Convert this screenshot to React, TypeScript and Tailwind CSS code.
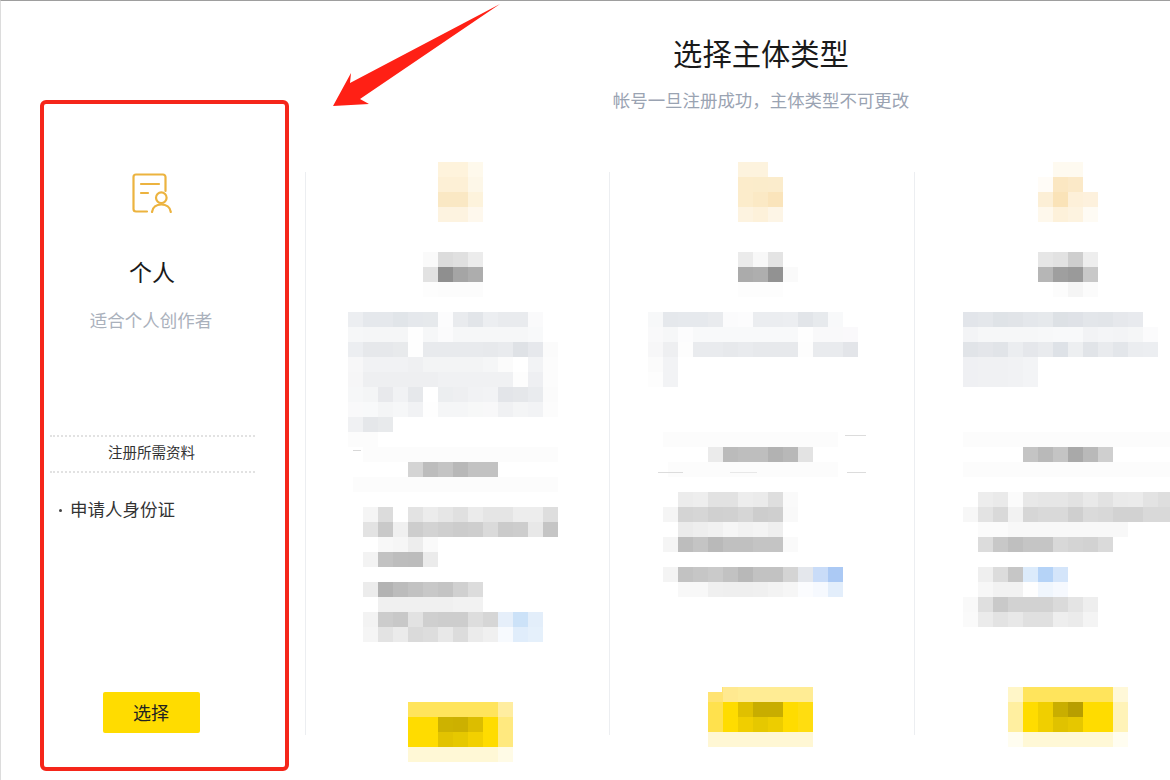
type Row = [number, number, string];
type Box = [number, number, number, number, string];

const FONT = "font-['Liberation_Sans','Noto_Sans_CJK_SC',sans-serif]";

// mosaic cells: [y, first x, colours], all in page coordinates, 15px per cell
const col1: Row[] = [
  [162, 438, "fef3dc fef3dc fef9ec"],
  [177, 438, "fdf0d6 fdf0d6 fdf7e8"],
  [192, 438, "fae8c4 fae8c4 fdf3dc"],
  [207, 438, "fdf3e0 fdf3e0 fef8ed"],
  [252, 423, "fafafa dcdcdc e0e0e0 ececec"],
  [267, 423, "e2e2e2 8f8f8f a5a5a5 adadad"],
  [282, 423, "fdfdfd fcfcfc fcfcfc fcfcfc"],
  [312, 348, "eceef1 e5e8ec e5e8ec e1e5e9 e5e8ec e6e9ec fcfcfd e9ebee e2e5e9 eceef1 e9ebee e9ebee fafafb"],
  [327, 348, "f6f7f8 f5f6f7 f5f6f7 f5f6f7 fefefe f6f7f8 fbfbfc f6f7f8 f6f7f8 f6f7f8 f6f7f8 f6f7f8 f8f9fa"],
  [342, 348, "eceef1 e6e8eb e6e8eb e8eaec fefefe e8eaed e8eaed e8eaed e8eaed e7e9ec e9ebee dfe2e6 e6e8ec fbfbfb"],
  [357, 348, "f7f7f8 f1f2f4 f1f2f4 f1f2f4 eff0f2 f3f4f5 f3f4f5 f3f4f5 f3f4f5 f5f6f7 fbfbfb ffffff f2f3f5 fcfcfc"],
  [372, 348, "f6f6f7 eeeff1 eeeff1 eeeff1 eeeff1 eeeff1 f0f1f3 f0f1f3 f0f1f3 f0f1f3 f0f1f3 fdfdfd eeeff2 fcfcfc"],
  [387, 348, "f6f7f8 f4f5f6 e8e9ec f1f2f4 e6e8eb ffffff eceef0 eeeff1 f1f2f4 f2f3f5 e3e5e9 e5e7ea e9ebee fbfbfb"],
  [402, 348, "f9f9fa f8f9fa f4f5f6 f6f7f8 f1f2f4 fefefe f5f6f7 f5f6f7 f7f8f8 f8f8f9 f0f1f3 f4f5f6 f2f3f5 fcfcfc"],
  [417, 348, "f0f1f3 e5e7ea e8eaec"],
  [432, 348, "fcfcfc fcfcfc"],
  [462, 408, "d4d4d4 bdbdbd c4c4c4 b8b8b8 c2c2c2 c2c2c2"],
  [507, 363, "f5f5f5 dcdcdc - e3e3e3 ececec e6e6e6 e0e0e0 ebebeb e5e5e5 e5e5e5 ededed ededed dedede"],
  [522, 363, "e3e3e3 c9c9c9 f0f0f0 cdcdcd d3d3d3 cfcfcf cccccc cecece dadada cbcbcb cdcdcd e8e8e8 c5c5c5"],
  [537, 378, "f8f8f8 f6f6f6 ededed fafafa"],
  [552, 363, "f3f3f3 c2c2c2 bdbdbd bcbcbc ebebeb"],
  [582, 363, "ececec b3b3b3 bcbcbc c2c2c2 c8c8c8 c4c4c4 d0d0d0 dcdcdc"],
  [597, 378, "f0f0f0 f0f0f0 f0f0f0 f0f0f0 f0f0f0 f2f2f2 f2f2f2"],
  [612, 363, "f3f3f3 cccccc c8c8c8 e2e2e2 cfcfcf cdcdcd cdcdcd dddddd d6d6d6 e6effa cce2f8 e3eefa"],
  [627, 363, "f5f5f5 e3e3e3 ebebeb dadada dddddd e8e8e8 dcdcdc ebebeb f0f0f0 f7fafe e0edfb e5f0fb"],
  [702, 408, "ffe45c ffe45c ffe45c ffe45c ffe45c ffe45c ffeda0"],
  [717, 408, "ffdc00 ffdc00 cdb200 ccb000 dcbd00 ffdc00 ffe97f"],
  [732, 408, "ffdc00 ffdc00 e2c300 e6c800 f2d000 ffdc00 ffe97f"],
  [747, 408, "fff8d6 fff8d6 fff8d6 fff8d6 fff8d6 fff8d6 fffbe6"],
];
const box1: Box[] = [
  [363, 447, 195, 15, "fcfcfc"],
  [353, 477, 205, 15, "fcfcfc"],
  [353, 450, 8, 1, "d8d8d8"],
];

const col2: Row[] = [
  [162, 738, "fdf3de fdf3de"],
  [177, 738, "fceccb fbeccb fbeccc"],
  [192, 738, "fceccb fbe9c5 fae4bb"],
  [207, 738, "fdf3e0 fdf1da fdf5e6"],
  [252, 738, "ebebeb f8f8f8 e4e4e4"],
  [267, 738, "ababab aeaeae 929292 fafafa"],
  [282, 738, "fdfdfd fdfdfd fdfdfd"],
  [312, 648, "f7f8f9 e5e8ec e6e9ed e6e9ed e9ebee fbfbfc fcfcfd ebedf0 ebedf0 eceef1 e2e5e9 e7eaed f8f9fa"],
  [327, 648, "f9f9fa f6f7f8 fcfcfd f8f9fa f8f9fa f8f9fa f8f9fa f8f9fa f8f9fa f8f9fa fefefe f9f9fa f9f9fa faf9fb"],
  [342, 648, "f7f7f8 eeeff1 fdfdfd e9ebee e9ebee e7e9ec e9ebee e7e9ec e7e9ec e7e9ec fdfdfd e9ebee e9ebee e3e5e9"],
  [357, 648, "fbfbfb f2f3f5"],
  [372, 648, "fdfdfd f2f3f5"],
  [447, 708, "ebebeb bbbbbb bebebe bebebe b2b2b2 b8b8b8 e3e3e3"],
  [492, 678, "ececec eeeeee e2e2e2 e2e2e2 ededed ebebeb dedede fafafa"],
  [507, 663, "f5f5f5 d4d4d4 d6d6d6 d0d0d0 d1d1d1 d6d6d6 cdcdcd cfcfcf f9f9f9"],
  [522, 678, "ebebeb eeeeee f1f1f1 f6f6f6 f2f2f2 f4f4f4 efefef"],
  [537, 663, "f5f5f5 bdbdbd c4c4c4 b9b9b9 c0c0c0 c0c0c0 c4c4c4 c4c4c4 fafafa"],
  [567, 663, "f4f4f4 c2c2c2 c6c6c6 cacaca c2c2c2 b8b8b8 c2c2c2 c2c2c2 d4d4d4 e4e7ec c9dcf8 abc9f4"],
  [582, 678, "f8f8f8 f8f8f8 f0f0f0 efefef efefef f0f0f0 f3f3f3 f6f6f6 fbfcfe f6f9fe e3eefb"],
  [687, 708, "ffe372 ffe990 ffec94 ffec94 ffec94 ffec94 ffec94"],
  [702, 708, "ffe14d ffdc00 e0c000 c8ad00 c8ad00 ffdc00 ffdd10"],
  [717, 708, "ffe14d ffdc00 f0ce00 e6c800 edcd00 ffdc00 ffdd10"],
  [732, 708, "fff7d4 fff7d4 fff7d4 fff7d4 fff7d4 fff7d4 fff7d4"],
];
const box2: Box[] = [
  [663, 432, 175, 15, "fcfcfc"],
  [845, 435, 21, 1, "dcdcdc"],
  [668, 462, 170, 15, "fcfcfc"],
  [658, 472, 25, 1, "dcdcdc"],
  [730, 472, 27, 1, "e8e8e8"],
  [847, 472, 19, 1, "dcdcdc"],
  [708, 687, 14, 5, "ffffff"],
];

const col3: Row[] = [
  [162, 1053, "fefaf0 fefaf0"],
  [177, 1038, "fffcf7 fbe7c2 fbe9c8"],
  [192, 1038, "fcefd6 fae3b8 fdf0d9 fdf1dd"],
  [207, 1038, "fef8ec fdf1da fdf3e0 fefbf4"],
  [252, 1038, "e6e6e6 e2e2e2 cecece eeeeee"],
  [267, 1038, "b6b6b6 9f9f9f 9a9a9a c8c8c8"],
  [282, 1053, "fcfcfc f5f5f5 fbfbfb"],
  [312, 963, "e2e5ea e4e7eb dfe3e7 e1e4e8 e4e7eb e6e9ec dde1e5 dfe2e7 e3e6ea e2e5e9 e6e8ec e8eaee"],
  [327, 963, "f3f4f6 f6f7f8 f6f7f8 f6f7f8 f6f7f8 f7f8f9 f8f9fa f8f9fa f2f3f5 f4f5f7 f3f4f6 f5f6f7 fbfbfc"],
  [342, 963, "e1e4e8 e4e6ea e1e4e8 ebedf0 e5e7eb e9ebee dee2e7 edeff1 e1e4e8 e9ebee e3e6ea ebedf0 eceef1"],
  [357, 963, "eff0f3 f0f1f3 f0f1f3 f1f2f4 f3f4f6"],
  [372, 963, "eff0f3 f0f1f3 f0f1f3 f1f2f4 f3f4f6"],
  [447, 1023, "c4c4c4 b9b9b9 c4c4c4 a9a9a9 b9b9b9 cfcfcf"],
  [492, 978, "ededed eaeaea fbfbfb e8e8e8 e6e6e6 e6e6e6 e2e2e2 e9e9e9 e2e2e2 eaeaea ebebeb e3e3e3 dedede"],
  [507, 963, "f7f7f7 e3e3e3 d9d9d9 f2f2f2 d6d6d6 d9d9d9 d9d9d9 cfcfcf dadada d8d8d8 d2d2d2 d2d2d2 d9d9d9 d9d9d9"],
  [522, 978, "fbfbfb fbfbfb f8f8f8 f8f8f8 f8f8f8 f8f8f8 f8f8f8 f8f8f8 f8f8f8 f8f8f8"],
  [537, 978, "dcdcdc c8c8c8 bfbfbf c5c5c5 c5c5c5 d8d8d8 d4d4d4 d2d2d2 dadada"],
  [567, 978, "efefef dcdcdc c6c6c6 dcebfb b5d3f7 d4e5fa"],
  [582, 978, "f7f7f7 f2f2f2 f2f2f2 fefefe f0f6fd f6f9fe"],
  [597, 963, "f9f9f9 dfdfdf c9c9c9 d2d2d2 d2d2d2 d2d2d2 dadada e4e4e4 eeeeee"],
  [612, 963, "fafafa ebebeb e3e3e3 e8e8e8 e0e0e0 e0e0e0 eeeeee ebebeb f4f4f4"],
  [687, 1008, "fff6c8 ffe45c ffe45c ffe45c ffe45c ffe45c ffe45c fff8d8"],
  [702, 1008, "ffefa0 ffdc00 f0cf00 c9ae00 b89e00 ffdc00 ffdc00 fff3b8"],
  [717, 1008, "ffefa0 ffdc00 f0cf00 e0c200 e6c700 ffdc00 ffdc00 fff3b8"],
  [732, 1008, "fffdf0 fff8d6 fff8d6 fff8d6 fff8d6 fff8d6 fff8d6 fffdf0"],
];
const box3: Box[] = [
  [963, 432, 207, 15, "fcfcfc"],
  [963, 462, 207, 15, "fcfcfc"],
];

function Mosaic({ x, rows, boxes }: { x: number; rows: Row[]; boxes: Box[] }) {
  return (
    <svg
      width="304"
      height="600"
      viewBox={`${x} 162 304 600`}
      shapeRendering="crispEdges"
      className="-mt-[10px] block overflow-hidden"
    >
      {boxes.map(([bx, by, w, h, c], i) =>
        c === "ffffff" ? null : <rect key={i} x={bx} y={by} width={w} height={h} fill={`#${c}`} />
      )}
      {rows.map(([y, sx, colours]) =>
        colours.split(" ").map((c, i) =>
          c === "-" ? null : <rect key={`${y}-${i}`} x={sx + i * 15} y={y} width="15" height="15" fill={`#${c}`} />
        )
      )}
      {boxes.map(([bx, by, w, h, c], i) =>
        c === "ffffff" ? <rect key={i} x={bx} y={by} width={w} height={h} fill="#fff" /> : null
      )}
    </svg>
  );
}

function PersonDocIcon() {
  return (
    <svg width="42" height="41" viewBox="132 172 42 41" fill="none" stroke="#ecb33f" strokeWidth="2.200" strokeLinecap="round" className="block">
      <path d="M147 211.500h-11a2.500 2.500 0 0 1-2.500-2.500V177a2.500 2.500 0 0 1 2.500-2.500h27a2.500 2.500 0 0 1 2.500 2.500v14" />
      <path d="M141 184h18M141 193h7" />
      <circle cx="161.300" cy="197.700" r="5.300" />
      <path d="M152 212c.6-4.800 4.500-7.500 9.300-7.500s8.900 2.700 9.500 7.500" />
    </svg>
  );
}

function PersonCard() {
  return (
    <div className="h-[671px] w-[249px] rounded-[6px] border-4 border-[#f5261a] pl-1.5">
      <div className="flex w-[205px] flex-col items-center pt-[68px]">
        <PersonDocIcon />
        <div className="mr-[1px] mt-[44px] text-[23px] leading-[32px] text-[#1a1a1a]">个人</div>
        <div className="mr-[3px] mt-[17px] text-[17.500px] leading-[30px] text-[#aab1bc]">适合个人创作者</div>
        <div className="mt-[99px] flex h-[38px] w-full items-center justify-center border-y-2 border-dotted border-[#e2e2e2] pr-[2px] text-[14.500px] text-[#333]">
          注册所需资料
        </div>
        <div className="mt-[24px] flex w-full items-center text-[17.500px] leading-[26px] text-[#333]">
          <span className="ml-[9px] mr-[8px] h-[3px] w-[3px] rounded-full bg-[#444]" />
          申请人身份证
        </div>
        <button className="ml-[-3px] mt-[169px] h-[41px] w-[97px] rounded-[2px] bg-[#ffdc00] pt-[3px] text-[18px] text-[#222]">
          选择
        </button>
      </div>
    </div>
  );
}

export default function App() {
  return (
    <div className={`${FONT} relative flex h-[780px] w-[1170px] overflow-hidden border-l border-t border-l-[#dcdcdc] border-t-[#9e9e9e] bg-white`}>
      <div className="w-[304px] flex-none pl-[39px] pt-[99px]">
        <PersonCard />
      </div>
      <div className="w-[914px] flex-none">
        <div className="flex flex-col items-center pt-[34px]">
          <h1 className="mr-[2px] text-[29.300px] font-normal leading-[40px] text-[#1a1a1a]">选择主体类型</h1>
          <p className="mr-[2px] mt-[13px] text-[17.450px] leading-[26px] text-[#9aa3b2]">帐号一旦注册成功，主体类型不可更改</p>
        </div>
        <div className="mt-[58px] grid grid-cols-[304px_305px_305px]">
          <div className="h-[563px] border-l border-[#eceef1]">
            <Mosaic x={306} rows={col1} boxes={box1} />
          </div>
          <div className="h-[563px] border-l border-[#eceef1]">
            <Mosaic x={610} rows={col2} boxes={box2} />
          </div>
          <div className="h-[563px] border-l border-[#eceef1]">
            <Mosaic x={915} rows={col3} boxes={box3} />
          </div>
        </div>
      </div>
      {/* annotation arrow sits over the page */}
      <svg className="absolute left-[-1px] top-[-1px]" width="520" height="120" viewBox="0 0 520 120">
        <polygon points="500,4 350,83 351,73 333,106 369,104 360,99" fill="#ff2015" />
      </svg>
    </div>
  );
}
